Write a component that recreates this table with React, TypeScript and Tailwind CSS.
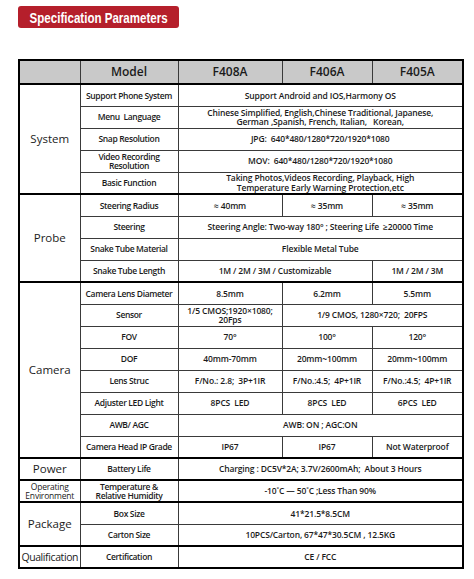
import React from "react"

type Cell = { text: React.ReactNode; span?: number }
type Row = { label: React.ReactNode; cells: Cell[] }
type Group = { name: React.ReactNode; size: string; rows: Row[] }

const groups: Group[] = [
  {
    name: "System",
    size: "text-[11.5px] leading-none",
    rows: [
      { label: "Support Phone System", cells: [{ text: "Support Android and IOS,Harmony OS", span: 3 }] },
      {
        label: "Menu  Language",
        cells: [
          {
            text: (
              <>
                Chinese Simplified, English,Chinese Traditional, Japanese,
                <br />
                German ,Spanish, French, Italian,&nbsp;&nbsp; Korean,
              </>
            ),
            span: 3,
          },
        ],
      },
      { label: "Snap Resolution", cells: [{ text: "JPG:  640*480/1280*720/1920*1080", span: 3 }] },
      {
        label: (
          <>
            Video Recording
            <br />
            Resolution
          </>
        ),
        cells: [{ text: "MOV:  640*480/1280*720/1920*1080", span: 3 }],
      },
      {
        label: "Basic Function",
        cells: [
          {
            text: (
              <>
                Taking Photos,Videos Recording, Playback, High
                <br />
                Temperature Early Warning Protection,etc
              </>
            ),
            span: 3,
          },
        ],
      },
    ],
  },
  {
    name: "Probe",
    size: "text-[11.5px] leading-none",
    rows: [
      { label: "Steering Radius", cells: [{ text: "≈ 40mm" }, { text: "≈ 35mm" }, { text: "≈ 35mm" }] },
      { label: "Steering", cells: [{ text: "Steering Angle: Two-way 180° ; Steering Life  ≥20000 Time", span: 3 }] },
      { label: "Snake Tube Material", cells: [{ text: "Flexible Metal Tube", span: 3 }] },
      { label: "Snake Tube Length", cells: [{ text: "1M / 2M / 3M / Customizable", span: 2 }, { text: "1M / 2M / 3M" }] },
    ],
  },
  {
    name: "Camera",
    size: "text-[11.5px] leading-none",
    rows: [
      { label: "Camera Lens Diameter", cells: [{ text: "8.5mm" }, { text: "6.2mm" }, { text: "5.5mm" }] },
      {
        label: "Sensor",
        cells: [
          {
            text: (
              <>
                1/5 CMOS;1920×1080;
                <br />
                20Fps
              </>
            ),
          },
          { text: "1/9 CMOS, 1280×720;  20FPS", span: 2 },
        ],
      },
      { label: "FOV", cells: [{ text: "70°" }, { text: "100°" }, { text: "120°" }] },
      { label: "DOF", cells: [{ text: "40mm-70mm" }, { text: "20mm~100mm" }, { text: "20mm~100mm" }] },
      {
        label: "Lens Struc",
        cells: [{ text: "F/No.: 2.8;  3P+1IR" }, { text: "F/No.:4.5;  4P+1IR" }, { text: "F/No.:4.5;  4P+1IR" }],
      },
      { label: "Adjuster LED Light", cells: [{ text: "8PCS  LED" }, { text: "8PCS  LED" }, { text: "6PCS  LED" }] },
      { label: "AWB/ AGC", cells: [{ text: "AWB: ON ; AGC:ON", span: 3 }] },
      { label: "Camera Head IP Grade", cells: [{ text: "IP67" }, { text: "IP67" }, { text: "Not Waterproof" }] },
    ],
  },
  {
    name: "Power",
    size: "text-[11.5px] leading-none",
    rows: [{ label: "Battery Life", cells: [{ text: "Charging : DC5V*2A; 3.7V/2600mAh;  About 3 Hours", span: 3 }] }],
  },
  {
    name: (
      <>
        Operating
        <br />
        Environment
      </>
    ),
    size: "text-[8.5px] leading-[9.5px] tracking-[-0.2px]",
    rows: [
      {
        label: (
          <>
            Temperature &amp;
            <br />
            Relative Humidity
          </>
        ),
        cells: [{ text: "-10˚C — 50˚C ;Less Than 90%", span: 3 }],
      },
    ],
  },
  {
    name: "Package",
    size: "text-[11.5px] leading-none",
    rows: [
      { label: "Box Size", cells: [{ text: "41*21.5*8.5CM", span: 3 }] },
      { label: "Carton Size", cells: [{ text: "10PCS/Carton, 67*47*30.5CM , 12.5KG", span: 3 }] },
    ],
  },
  {
    name: "Qualification",
    size: "text-[10.5px] leading-none tracking-[-0.4px]",
    rows: [{ label: "Certification", cells: [{ text: "CE / FCC", span: 3 }] }],
  },
]

const cellBase = "border border-[#3a3a3a] text-center align-middle whitespace-pre p-0"

export default function App() {
  return (
    <div
      className="w-[474px] h-[579px] bg-white pt-[6px] pl-[18px] text-[#1b1b1b]"
      style={{ fontFamily: '"Open Sans", "Noto Sans", sans-serif' }}
    >
      {/* Title banner */}
      <div className="w-[161px] h-[22px] rounded-[3px] bg-[#b51f2b] flex items-center justify-center overflow-hidden">
        <span
          className="inline-block whitespace-nowrap text-white text-[15px] font-bold leading-none scale-x-[0.77]"
          style={{ fontFamily: '"Liberation Sans", Arial, sans-serif' }}
        >
          Specification Parameters
        </span>
      </div>

      <table className="mt-[31px] w-[444px] table-fixed border-collapse border-2 border-black">
        <colgroup>
          <col className="w-[61px]" />
          <col className="w-[98px]" />
          <col className="w-[104px]" />
          <col className="w-[90px]" />
          <col className="w-[91px]" />
        </colgroup>
        <thead>
          <tr className="h-[24px] bg-[#c9c9c9] text-[12px]">
            <th className={cellBase}></th>
            <th className={cellBase + " font-semibold"}>Model</th>
            <th className={cellBase + " font-semibold"}>F408A</th>
            <th className={cellBase + " font-semibold"}>F406A</th>
            <th className={cellBase + " font-semibold"}>F405A</th>
          </tr>
        </thead>
        <tbody>
          {groups.map((g, gi) =>
            g.rows.map((r, ri) => (
              <tr key={`${gi}-${ri}`} className={"h-[22px] " + (ri === 0 ? "border-t-2 border-t-black" : "")}>
                {ri === 0 && (
                  <td rowSpan={g.rows.length} className={cellBase + " " + g.size}>
                    {g.name}
                  </td>
                )}
                <td className={cellBase + " text-[8.5px] font-semibold leading-[9.5px] tracking-[-0.35px]"}>{r.label}</td>
                {r.cells.map((c, ci) => (
                  <td
                    key={ci}
                    colSpan={c.span}
                    className={cellBase + " text-[8.5px] font-semibold leading-[9.5px] tracking-[-0.15px]"}
                  >
                    {c.text}
                  </td>
                ))}
              </tr>
            ))
          )}
        </tbody>
      </table>
    </div>
  )
}
